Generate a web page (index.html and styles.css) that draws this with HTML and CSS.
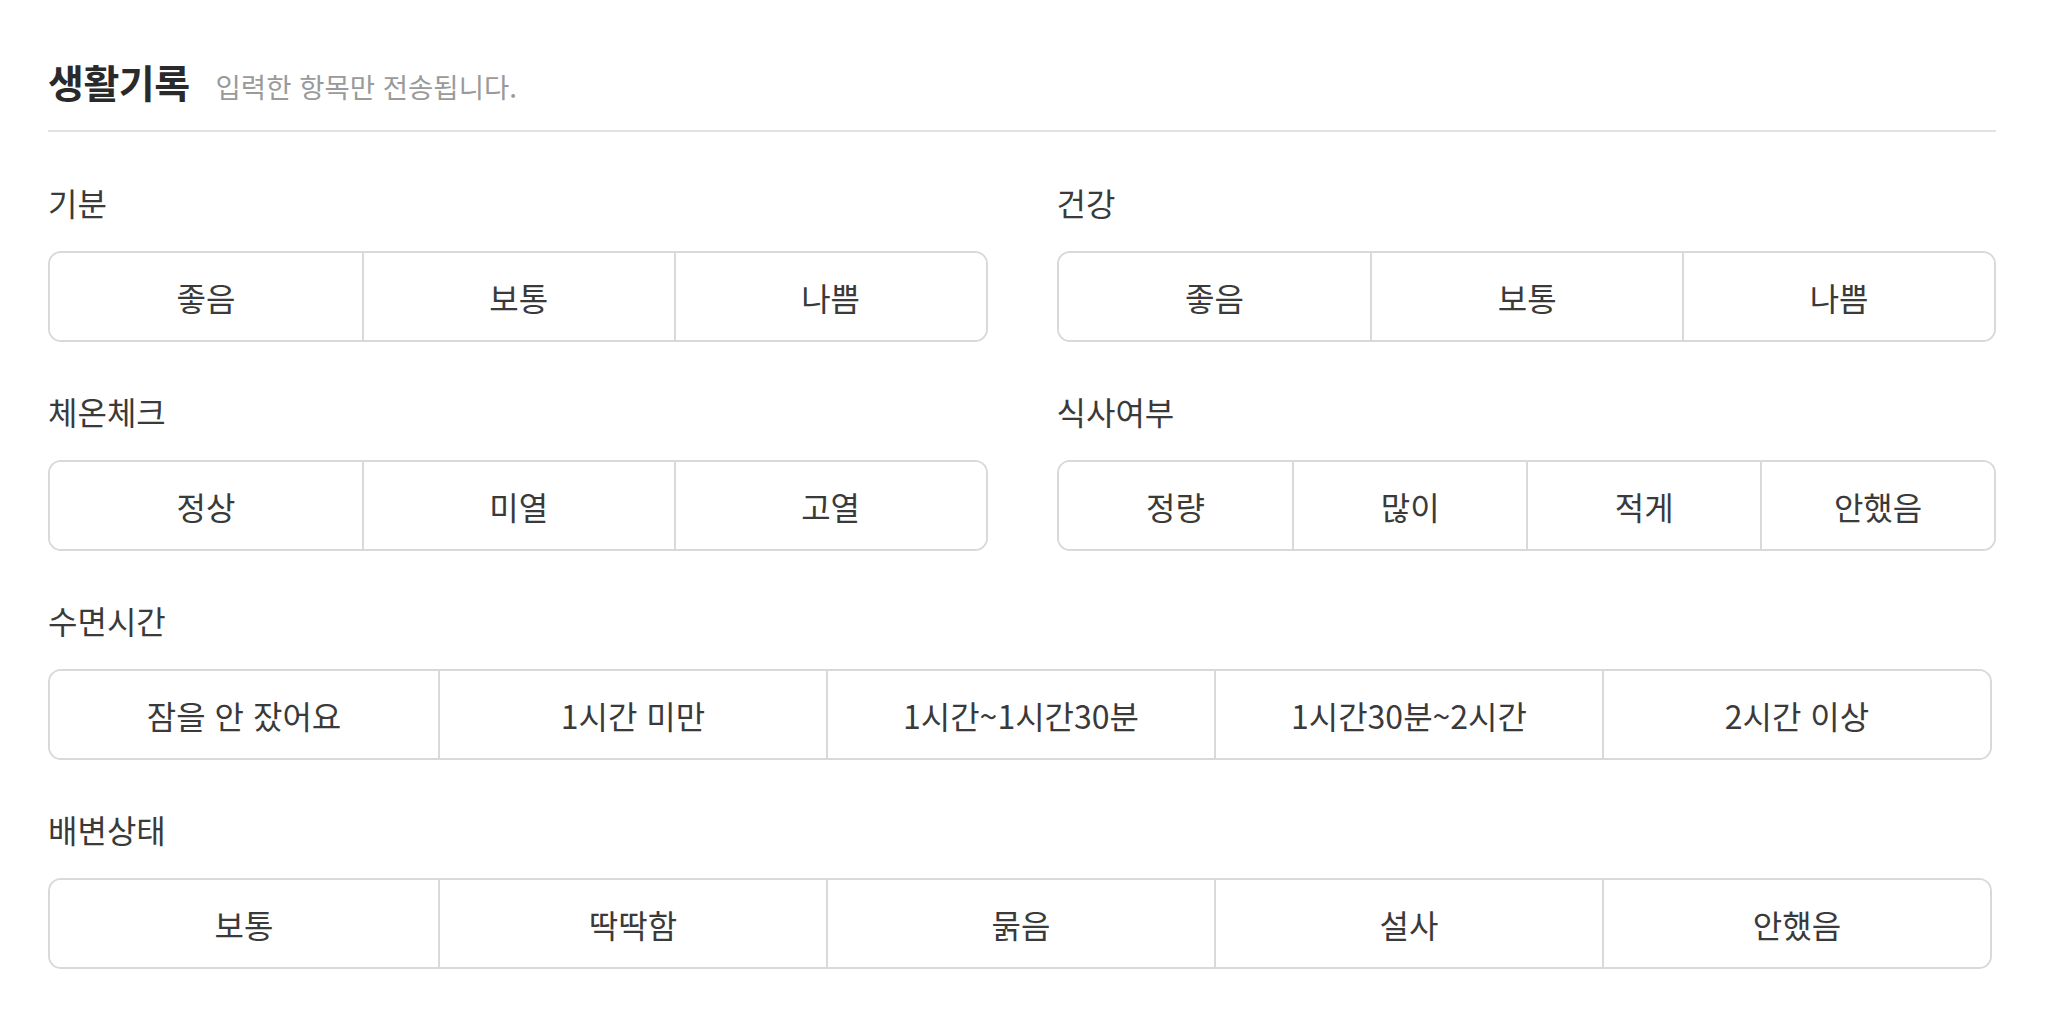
FILE: index.html
```html
<!DOCTYPE html>
<html lang="ko">
<head>
<meta charset="utf-8">
<title>생활기록</title>
<link rel="stylesheet" href="styles.css">
</head>
<body>
<div class="page">
  <div class="header">
    <h2 class="title">생활기록</h2>
    <span class="subtitle">입력한 항목만 전송됩니다.</span>
  </div>
  <div class="form">
    <div class="field">
      <div class="label">기분</div>
      <div class="choices cols-3">
        <button class="choice">좋음</button>
        <button class="choice">보통</button>
        <button class="choice">나쁨</button>
      </div>
    </div>
    <div class="field">
      <div class="label">건강</div>
      <div class="choices cols-3">
        <button class="choice">좋음</button>
        <button class="choice">보통</button>
        <button class="choice">나쁨</button>
      </div>
    </div>
    <div class="field">
      <div class="label">체온체크</div>
      <div class="choices cols-3">
        <button class="choice">정상</button>
        <button class="choice">미열</button>
        <button class="choice">고열</button>
      </div>
    </div>
    <div class="field">
      <div class="label">식사여부</div>
      <div class="choices cols-4">
        <button class="choice">정량</button>
        <button class="choice">많이</button>
        <button class="choice">적게</button>
        <button class="choice">안했음</button>
      </div>
    </div>
    <div class="field wide">
      <div class="label">수면시간</div>
      <div class="choices cols-5">
        <button class="choice">잠을 안 잤어요</button>
        <button class="choice">1시간 미만</button>
        <button class="choice">1시간~1시간30분</button>
        <button class="choice">1시간30분~2시간</button>
        <button class="choice">2시간 이상</button>
      </div>
    </div>
    <div class="field wide">
      <div class="label">배변상태</div>
      <div class="choices cols-5">
        <button class="choice">보통</button>
        <button class="choice">딱딱함</button>
        <button class="choice">묽음</button>
        <button class="choice">설사</button>
        <button class="choice">안했음</button>
      </div>
    </div>
  </div>
</div>
</body>
</html>
```

FILE: styles.css
```css
* { box-sizing: border-box; }
html, body { margin: 0; padding: 0; background: #fff; }
body {
  font-family: "Noto Sans CJK KR", "Noto Sans", sans-serif;
  color: #333;
}
.page {
  padding: 57px 52px 40px 48px;
}
.header {
  display: flex;
  align-items: baseline;
  gap: 26px;
  height: 75px;
  padding-bottom: 0;
  border-bottom: 2px solid #e2e2e2;
}
.title {
  margin: 0;
  font-size: 39px;
  line-height: 48px;
  font-weight: 700;
  color: #2a2a2a;
  letter-spacing: -0.5px;
}
.subtitle {
  font-size: 27.5px;
  line-height: 48px;
  color: #9a9a9a;
}
.form {
  display: grid;
  grid-template-columns: 1fr 1fr;
  column-gap: 69px;
  row-gap: 49px;
  padding-top: 50px;
}
.field.wide {
  grid-column: 1 / -1;
  margin-right: 4px;
}
.label {
  height: 40px;
  font-size: 32px;
  line-height: 40px;
  color: #3a3a3a;
  margin-bottom: 29px;
}
.choices {
  display: grid;
  height: 91px;
  border: 2px solid #d7dadd;
  border-radius: 13px;
  overflow: hidden;
}
.cols-3 { grid-template-columns: repeat(3, 1fr); }
.cols-4 { grid-template-columns: repeat(4, 1fr); }
.cols-5 { grid-template-columns: repeat(5, 1fr); }
.choice {
  font-family: inherit;
  font-size: 32px;
  line-height: 40px;
  color: #3a3a3a;
  background: #fff;
  border: 0;
  border-left: 2px solid #d7dadd;
  margin: 0;
  padding: 0;
}
.choice:first-child { border-left: 0; }
```
